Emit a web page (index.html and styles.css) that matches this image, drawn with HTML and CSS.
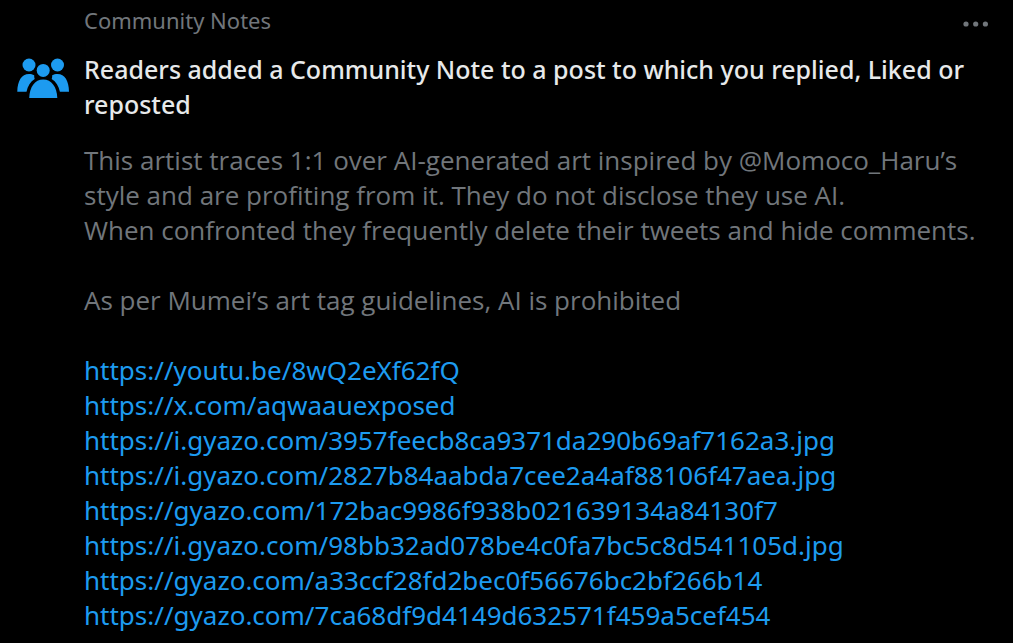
FILE: index.html
```html
<!DOCTYPE html>
<html lang="en">
<head>
    <meta charset="UTF-8">
    <meta name="viewport" content="width=device-width, initial-scale=1.0">
    <title>Community Notes</title>
    <link rel="stylesheet" href="styles.css">
</head>
<body>
    <article class="notification">
        <div class="icon">
            <svg viewBox="0 0 52 42" aria-hidden="true">
                <circle cx="12" cy="8" r="6.5"/>
                <circle cx="40.5" cy="8" r="6.5"/>
                <circle cx="26.2" cy="13.4" r="6.5"/>
                <path d="M12.2 41c.4-11 5.5-18.5 14-18.5S39.9 30 40.3 41z"/>
                <path d="M.3 34.7C.5 24 4.500 17 12 17c1.900 0 3.600.4 5.200 1.300-.1 1.300.1 2.500.5 3.600-4.300 2.600-7 7.200-8.200 12.800z"/>
                <path d="M52 34.7C51.900 24 47.900 17 40.400 17c-1.900 0-3.600.4-5.200 1.300.1 1.300-.1 2.500-.5 3.600 4.300 2.600 7 7.200 8.200 12.800z"/>
            </svg>
        </div>
        <div class="content">
            <header class="header">
                <span class="source">Community Notes</span>
                <button class="more" type="button" aria-label="More">
                    <svg viewBox="0 0 26 6" aria-hidden="true">
                        <circle cx="3" cy="3" r="2.6"/>
                        <circle cx="12.7" cy="3" r="2.6"/>
                        <circle cx="22.4" cy="3" r="2.6"/>
                    </svg>
                </button>
            </header>
            <h1 class="title">Readers added a Community Note to a post to which you replied, Liked or reposted</h1>
            <div class="note">
                <p>This artist traces 1:1 over AI-generated art inspired by @Momoco_Haru’s style and are profiting from it. They do not disclose they use AI.<br>When confronted they frequently delete their tweets and hide comments.</p>
                <p>As per Mumei’s art tag guidelines, AI is prohibited</p>
                <ul class="links">
                    <li><a href="https://youtu.be/8wQ2eXf62fQ">https://youtu.be/8wQ2eXf62fQ</a></li>
                    <li><a href="https://x.com/aqwaauexposed">https://x.com/aqwaauexposed</a></li>
                    <li><a href="https://i.gyazo.com/3957feecb8ca9371da290b69af7162a3.jpg">https://i.gyazo.com/3957feecb8ca9371da290b69af7162a3.jpg</a></li>
                    <li><a href="https://i.gyazo.com/2827b84aabda7cee2a4af88106f47aea.jpg">https://i.gyazo.com/2827b84aabda7cee2a4af88106f47aea.jpg</a></li>
                    <li><a href="https://gyazo.com/172bac9986f938b021639134a84130f7">https://gyazo.com/172bac9986f938b021639134a84130f7</a></li>
                    <li><a href="https://i.gyazo.com/98bb32ad078be4c0fa7bc5c8d541105d.jpg">https://i.gyazo.com/98bb32ad078be4c0fa7bc5c8d541105d.jpg</a></li>
                    <li><a href="https://gyazo.com/a33ccf28fd2bec0f56676bc2bf266b14">https://gyazo.com/a33ccf28fd2bec0f56676bc2bf266b14</a></li>
                    <li><a href="https://gyazo.com/7ca68df9d4149d632571f459a5cef454">https://gyazo.com/7ca68df9d4149d632571f459a5cef454</a></li>
                </ul>
            </div>
        </div>
    </article>
</body>
</html>
```

FILE: styles.css
```css
body {
    margin: 0;
    background-color: #000;
    color: #e7e9ea;
    font-family: "Noto Sans", "Open Sans", sans-serif;
    font-size: 26px;
    line-height: 35px;
}
.notification {
    display: flex;
    gap: 15px;
    padding: 3px 24px 8px 17px;
}
.icon {
    flex: none;
    width: 52px;
    padding-top: 54px;
}
.icon svg {
    display: block;
    width: 100%;
    fill: #1d9bf0;
}
.content {
    flex: 1;
    min-width: 0;
}
.header {
    display: flex;
    justify-content: space-between;
    align-items: center;
    color: #71767b;
    font-size: 22px;
}
.more {
    display: flex;
    padding: 6px 0 0;
    border: 0;
    background: none;
    color: inherit;
}
.more svg {
    width: 26px;
    fill: currentColor;
}
.title {
    margin: 14px 0 21px;
    font-size: 25px;
    font-weight: 500;
}
.note {
    color: #71767b;
}
.note p {
    margin: 0 0 35px;
    font-family: "Open Sans", "Noto Sans", sans-serif;
}
.links {
    margin: 0;
    padding: 0;
    list-style: none;
}
.links a {
    color: #1d9bf0;
    text-decoration: none;
}
```
